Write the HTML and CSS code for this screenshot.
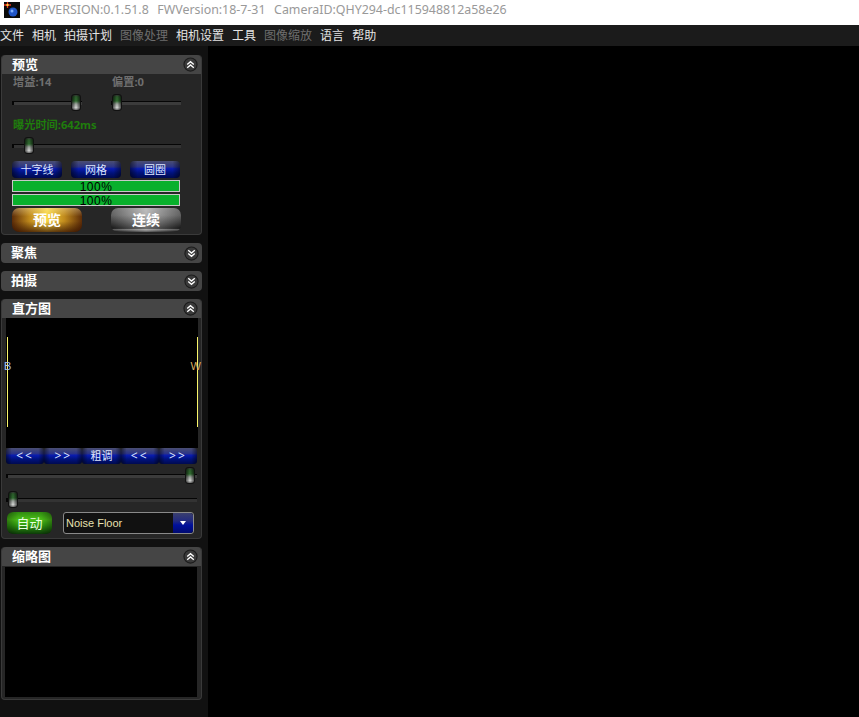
FILE: index.html
```html
<!DOCTYPE html>
<html lang="zh">
<head>
  <meta charset="UTF-8" />
  <title>APPVERSION</title>
  <link rel="stylesheet" href="styles.css">
</head>
<body>
  <svg width="0" height="0" class="defs">
    <defs>
      <symbol id="up" viewBox="0 0 16 16">
        <circle cx="8" cy="8" r="7" fill="#3a3a3a" stroke="#1c1c1c" stroke-width="1.2"/>
        <path d="M4.5 8 8 5l3.5 3M4.5 11.5 8 8.500l3.500 3" fill="none" stroke="#fff" stroke-width="1.400"/>
      </symbol>
      <symbol id="down" viewBox="0 0 16 16">
        <circle cx="8" cy="8" r="7" fill="#3a3a3a" stroke="#1c1c1c" stroke-width="1.2"/>
        <path d="M4.5 4.500 8 7.500l3.500-3M4.500 8 8 11l3.500-3" fill="none" stroke="#fff" stroke-width="1.400"/>
      </symbol>
    </defs>
  </svg>

  <header class="titlebar">
    <svg class="logo" width="16" height="16" viewBox="0 0 16 16">
      <rect width="16" height="16" fill="#0a0a0a"/>
      <circle cx="9" cy="10" r="4.500" fill="#1f55c8"/>
      <circle cx="8" cy="9" r="1.500" fill="#7fb0ff"/>
      <path d="M0 3h7M3.500 0v6" stroke="#e8301c" stroke-width="1.300"/>
      <circle cx="3.500" cy="3" r="1.200" fill="#ffd23c"/>
    </svg>
    <span>APPVERSION:0.1.51.8</span>
    <span>FWVersion:18-7-31</span>
    <span>CameraID:QHY294-dc115948812a58e26</span>
  </header>

  <nav class="menubar">
    <span>文件</span>
    <span>相机</span>
    <span>拍摄计划</span>
    <span class="off">图像处理</span>
    <span>相机设置</span>
    <span>工具</span>
    <span class="off">图像缩放</span>
    <span>语言</span>
    <span>帮助</span>
  </nav>

  <div class="app">
    <aside class="sidebar">

      <section class="panel">
        <div class="panel-head"><h2>预览</h2><svg class="toggle"><use href="#up"/></svg></div>
        <div class="preview-body">
          <div class="two-col">
            <div class="col">
              <div class="lbl">增益:14</div>
              <div class="slider"><i class="thumb" style="left: 57px"></i></div>
            </div>
            <div class="col">
              <div class="lbl">偏置:0</div>
              <div class="slider"><i class="thumb" style="left: -1px"></i></div>
            </div>
          </div>
          <div class="lbl green">曝光时间:642ms</div>
          <div class="slider exposure dark"><i class="thumb" style="left: 10px"></i></div>
          <div class="blue-row">
            <button class="blue">十字线</button>
            <button class="blue">网格</button>
            <button class="blue">圆圈</button>
          </div>
          <div class="bar">100%</div>
          <div class="bar">100%</div>
          <div class="big-row">
            <button class="big gold">预览</button>
            <button class="big silver">连续</button>
          </div>
        </div>
      </section>

      <section class="panel closed">
        <div class="panel-head"><h2>聚焦</h2><svg class="toggle"><use href="#down"/></svg></div>
      </section>

      <section class="panel closed">
        <div class="panel-head"><h2>拍摄</h2><svg class="toggle"><use href="#down"/></svg></div>
      </section>

      <section class="panel">
        <div class="panel-head"><h2>直方图</h2><svg class="toggle"><use href="#up"/></svg></div>
        <div class="hist-body">
          <div class="hist">
            <i class="hist-line l"></i>
            <i class="hist-line r"></i>
            <span class="hist-b">B</span>
            <span class="hist-w">W</span>
          </div>
          <div class="hist-btns">
            <button class="blue arrows">&lt;&lt;</button>
            <button class="blue arrows">&gt;&gt;</button>
            <button class="blue">粗调</button>
            <button class="blue arrows">&lt;&lt;</button>
            <button class="blue arrows">&gt;&gt;</button>
          </div>
          <div class="slider wide"><i class="thumb" style="left: 177px"></i></div>
          <div class="slider wide second dark"><i class="thumb" style="left: 0"></i></div>
          <div class="auto-row">
            <button class="auto">自动</button>
            <div class="combo">
              <span>Noise Floor</span>
              <div class="combo-btn"><i></i></div>
            </div>
          </div>
        </div>
      </section>

      <section class="panel">
        <div class="panel-head"><h2>缩略图</h2><svg class="toggle"><use href="#up"/></svg></div>
        <div class="thumbs"></div>
      </section>

    </aside>
    <main class="view"></main>
  </div>
</body>
</html>
```

FILE: styles.css
```css
html, body {
  margin: 0;
  height: 717px;
  overflow: hidden;
  background: #000;
}
body {
  font-family: "Noto Sans", "Noto Sans CJK SC", sans-serif;
  font-size: 12px;
  display: flex;
  flex-direction: column;
}
button {
  font-family: inherit;
  border: 0;
  padding: 0;
  margin: 0;
}
.defs {
  position: absolute;
}

.titlebar {
  height: 25px;
  background: #fff;
  color: #999;
  display: flex;
  align-items: center;
  gap: 8.5px;
  padding-left: 4px;
  font-size: 12.4px;
  white-space: nowrap;
  box-sizing: border-box;
  padding-bottom: 6px;
}
.titlebar .logo {
  margin-right: -3.500px;
}

.menubar {
  height: 21px;
  background: #1b1b1b;
  color: #e4e4e4;
  display: flex;
  gap: 8px;
  align-items: center;
  line-height: 21px;
  white-space: nowrap;
}
.menubar .off {
  color: #6e6e6e;
}

.app {
  flex: 1;
  display: flex;
  min-height: 0;
}
.sidebar {
  width: 208px;
  background: #111;
  box-sizing: border-box;
  padding: 9px 6px 0 1px;
  display: flex;
  flex-direction: column;
  gap: 8px;
}
.view {
  flex: 1;
  background: #000;
}

.panel {
  background: #262626;
  border: 1px solid #3a3a3a;
  border-top: 0;
  border-radius: 4px;
}
.panel.closed {
  border: 0;
  background: none;
}
.panel-head {
  height: 19px;
  background: #454545;
  border-radius: 4px 4px 0 0;
  display: flex;
  align-items: center;
  justify-content: space-between;
  padding: 0 3px 0 10px;
}
.panel.closed .panel-head {
  height: 20px;
  border-radius: 4px;
}
.panel h2 {
  margin: -1px 0 0;
  font-size: 13px;
  font-weight: 700;
  color: #fff;
  line-height: 19px;
}
.toggle {
  width: 15px;
  height: 15px;
}

.preview-body {
  height: 160px;
  box-sizing: border-box;
  padding: 0 10px;
}
.two-col {
  display: flex;
  gap: 29px;
}
.col {
  width: 70px;
}
.lbl {
  font-size: 11.2px;
  font-weight: 700;
  color: #6f6f6f;
  line-height: 16px;
  padding-left: 1px;
  white-space: nowrap;
}
.lbl.green {
  color: #1f7d0c;
  margin-top: 11px;
  line-height: 18px;
}

.slider {
  position: relative;
  height: 4px;
  background: #3b3b3b;
  border-top: 1px solid #050505;
  border-left: 2px solid #050505;
  margin-top: 11px;
  box-sizing: border-box;
}
.slider.dark {
  background: #333;
}
.slider.exposure {
  width: 169px;
  margin-top: 10px;
}
.slider.wide {
  width: 191px;
  margin-top: 10px;
}
.slider.second {
  margin-top: 20px;
}
.thumb {
  position: absolute;
  top: -8px;
  width: 8px;
  height: 15px;
  border-radius: 3px;
  background:
    linear-gradient(90deg, rgba(0, 0, 0, .6), rgba(0, 0, 0, 0) 45%, rgba(0, 0, 0, 0) 55%, rgba(0, 0, 0, .6)),
    linear-gradient(#333 0, #2a5a2a 12%, #2f6a2f 40%, #9aa09a 60%, #d0d2d0 85%, #666 100%);
  border: 1px solid #111;
}

.blue {
  display: block;
  height: 17px;
  border-radius: 4px;
  color: #dfe6ff;
  font-size: 11px;
  line-height: 17px;
  background:
    linear-gradient(90deg, rgba(0, 0, 0, .5), rgba(0, 0, 0, 0) 15%, rgba(0, 0, 0, 0) 85%, rgba(0, 0, 0, .5)),
    linear-gradient(#4a4e72 0, #2c3488 35%, #0a1cb0 45%, #00127c 70%, #000a50 100%);
  text-align: center;
}
.blue-row {
  display: flex;
  gap: 9px;
  margin-top: 13px;
  margin-bottom: 2px;
}
.blue-row .blue {
  width: 50px;
}
.bar {
  width: 166px;
  height: 10px;
  background: #09b02c;
  border: 1px solid #c8c8c8;
  color: #000;
  font-family: "Liberation Sans", sans-serif;
  font-size: 12px;
  letter-spacing: .5px;
  line-height: 12px;
  text-align: center;
  margin-bottom: 2px;
}
.big-row {
  display: flex;
  justify-content: space-between;
  width: 169px;
}
.big {
  width: 70px;
  height: 24px;
  border-radius: 7px;
  color: #fff;
  font-size: 14px;
  font-weight: 700;
  line-height: 24px;
}
.gold {
  background:
    linear-gradient(rgba(255, 240, 190, .35) 0, rgba(0, 0, 0, 0) 35%, rgba(0, 0, 0, 0) 55%, rgba(50, 15, 0, .75) 100%),
    linear-gradient(90deg, #5c2c08, #c08a1c 25%, #f8d640 50%, #c08a1c 75%, #5c2c08);
}
.silver {
  background:
    linear-gradient(90deg, rgba(0, 0, 0, .35), rgba(255, 255, 255, .3) 50%, rgba(0, 0, 0, .35)),
    linear-gradient(#a4a4a4 0, #949494 30%, #5a5a5a 60%, #242424 85%, #888 90%, #111 100%);
}

.hist-body {
  height: 220px;
  padding: 0 3px 0 4px;
}
.hist {
  position: relative;
  height: 130px;
  width: 192px;
  background: #000;
}
.hist-line {
  position: absolute;
  top: 19px;
  height: 90px;
  width: 1px;
  background: #f8f46a;
}
.hist-line.l {
  left: 1px;
}
.hist-line.r {
  right: 0;
}
.hist-b, .hist-w {
  position: absolute;
  top: 41px;
  font-family: "Liberation Sans", sans-serif;
  font-size: 11px;
  line-height: 14px;
}
.hist-b {
  left: -2px;
  color: #a8c4f4;
}
.hist-w {
  right: -3px;
  color: #d8b060;
}
.hist-btns {
  display: flex;
  width: 191px;
}
.hist-btns .blue {
  flex: 1;
  height: 16px;
  line-height: 16px;
  border-radius: 3px;
}
.hist-btns .arrows {
  font-size: 12px;
  letter-spacing: 2px;
}
.auto-row {
  display: flex;
  align-items: center;
  gap: 11px;
  margin-top: 10px;
  padding-left: 1px;
}
.auto {
  width: 45px;
  height: 22px;
  border-radius: 6px;
  color: #e8ffe0;
  font-size: 13px;
  line-height: 22px;
  background:
    linear-gradient(90deg, rgba(0, 0, 0, .35), rgba(0, 0, 0, 0) 25%, rgba(0, 0, 0, 0) 75%, rgba(0, 0, 0, .35)),
    linear-gradient(#2f8a10 0, #4cc018 35%, #2f9a10 60%, #0c3a08 100%);
}
.combo {
  width: 129px;
  height: 20px;
  border: 1px solid #8a8a8a;
  border-radius: 3px;
  background: #111;
  display: flex;
  align-items: center;
  justify-content: space-between;
  color: #e8e0b0;
  font-family: "Liberation Sans", sans-serif;
  font-size: 11px;
}
.combo span {
  padding-left: 2px;
}
.combo-btn {
  width: 20px;
  height: 20px;
  background: linear-gradient(#3a3f6e 0, #222a80 40%, #00109c 60%, #000a70 100%);
  border-radius: 0 3px 3px 0;
  display: flex;
  align-items: center;
  justify-content: center;
}
.combo-btn i {
  width: 0;
  height: 0;
  border: 3px solid transparent;
  border-top: 4px solid #fff;
  border-bottom: 0;
}

.thumbs {
  height: 130px;
  width: 192px;
  margin: 1px 0 2px 3px;
  background: #000;
}
```
